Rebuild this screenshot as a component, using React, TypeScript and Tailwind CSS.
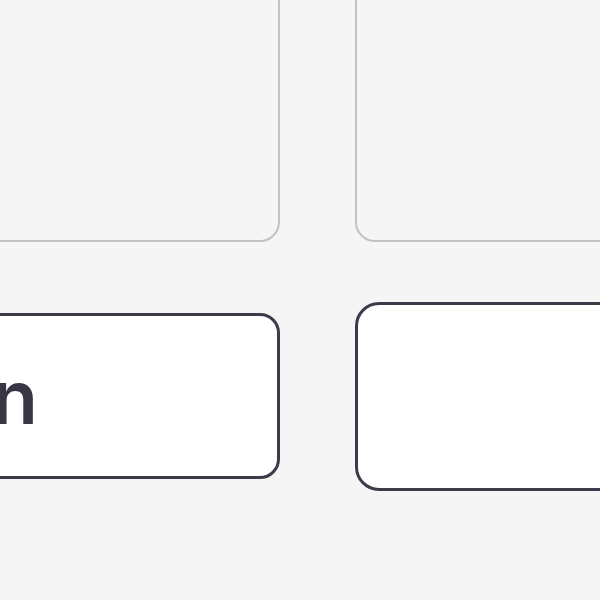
export default function App() {
  return (
    <div className="h-[600px] w-[600px] overflow-hidden bg-[#f5f5f6] font-['Inter',sans-serif]">
      <div className="-mt-[60px] ml-[-140px] flex w-[960px] gap-[75px]">
        {/* Left column */}
        <div className="flex w-[420px] shrink-0 flex-col">
          <div className="h-[302px] rounded-[20px] border-2 border-[#c2c2c4] bg-[#f5f5f6]" />
          <button className="mt-[71px] flex h-[166px] items-center justify-end overflow-hidden rounded-[20px] border-[3px] border-[#3b3b49] bg-white pr-[241px]">
            <span className="whitespace-nowrap text-[75px] font-semibold leading-none tracking-tight text-[#363645]">
              Sign in
            </span>
          </button>
        </div>

        {/* Right column */}
        <div className="flex w-[420px] shrink-0 flex-col">
          <div className="h-[302px] rounded-[20px] border-2 border-[#c2c2c4] bg-[#f5f5f6]" />
          <button className="mt-[60px] h-[189px] rounded-[24px] border-[3px] border-[#3b3b49] bg-white" />
        </div>
      </div>
    </div>
  );
}
